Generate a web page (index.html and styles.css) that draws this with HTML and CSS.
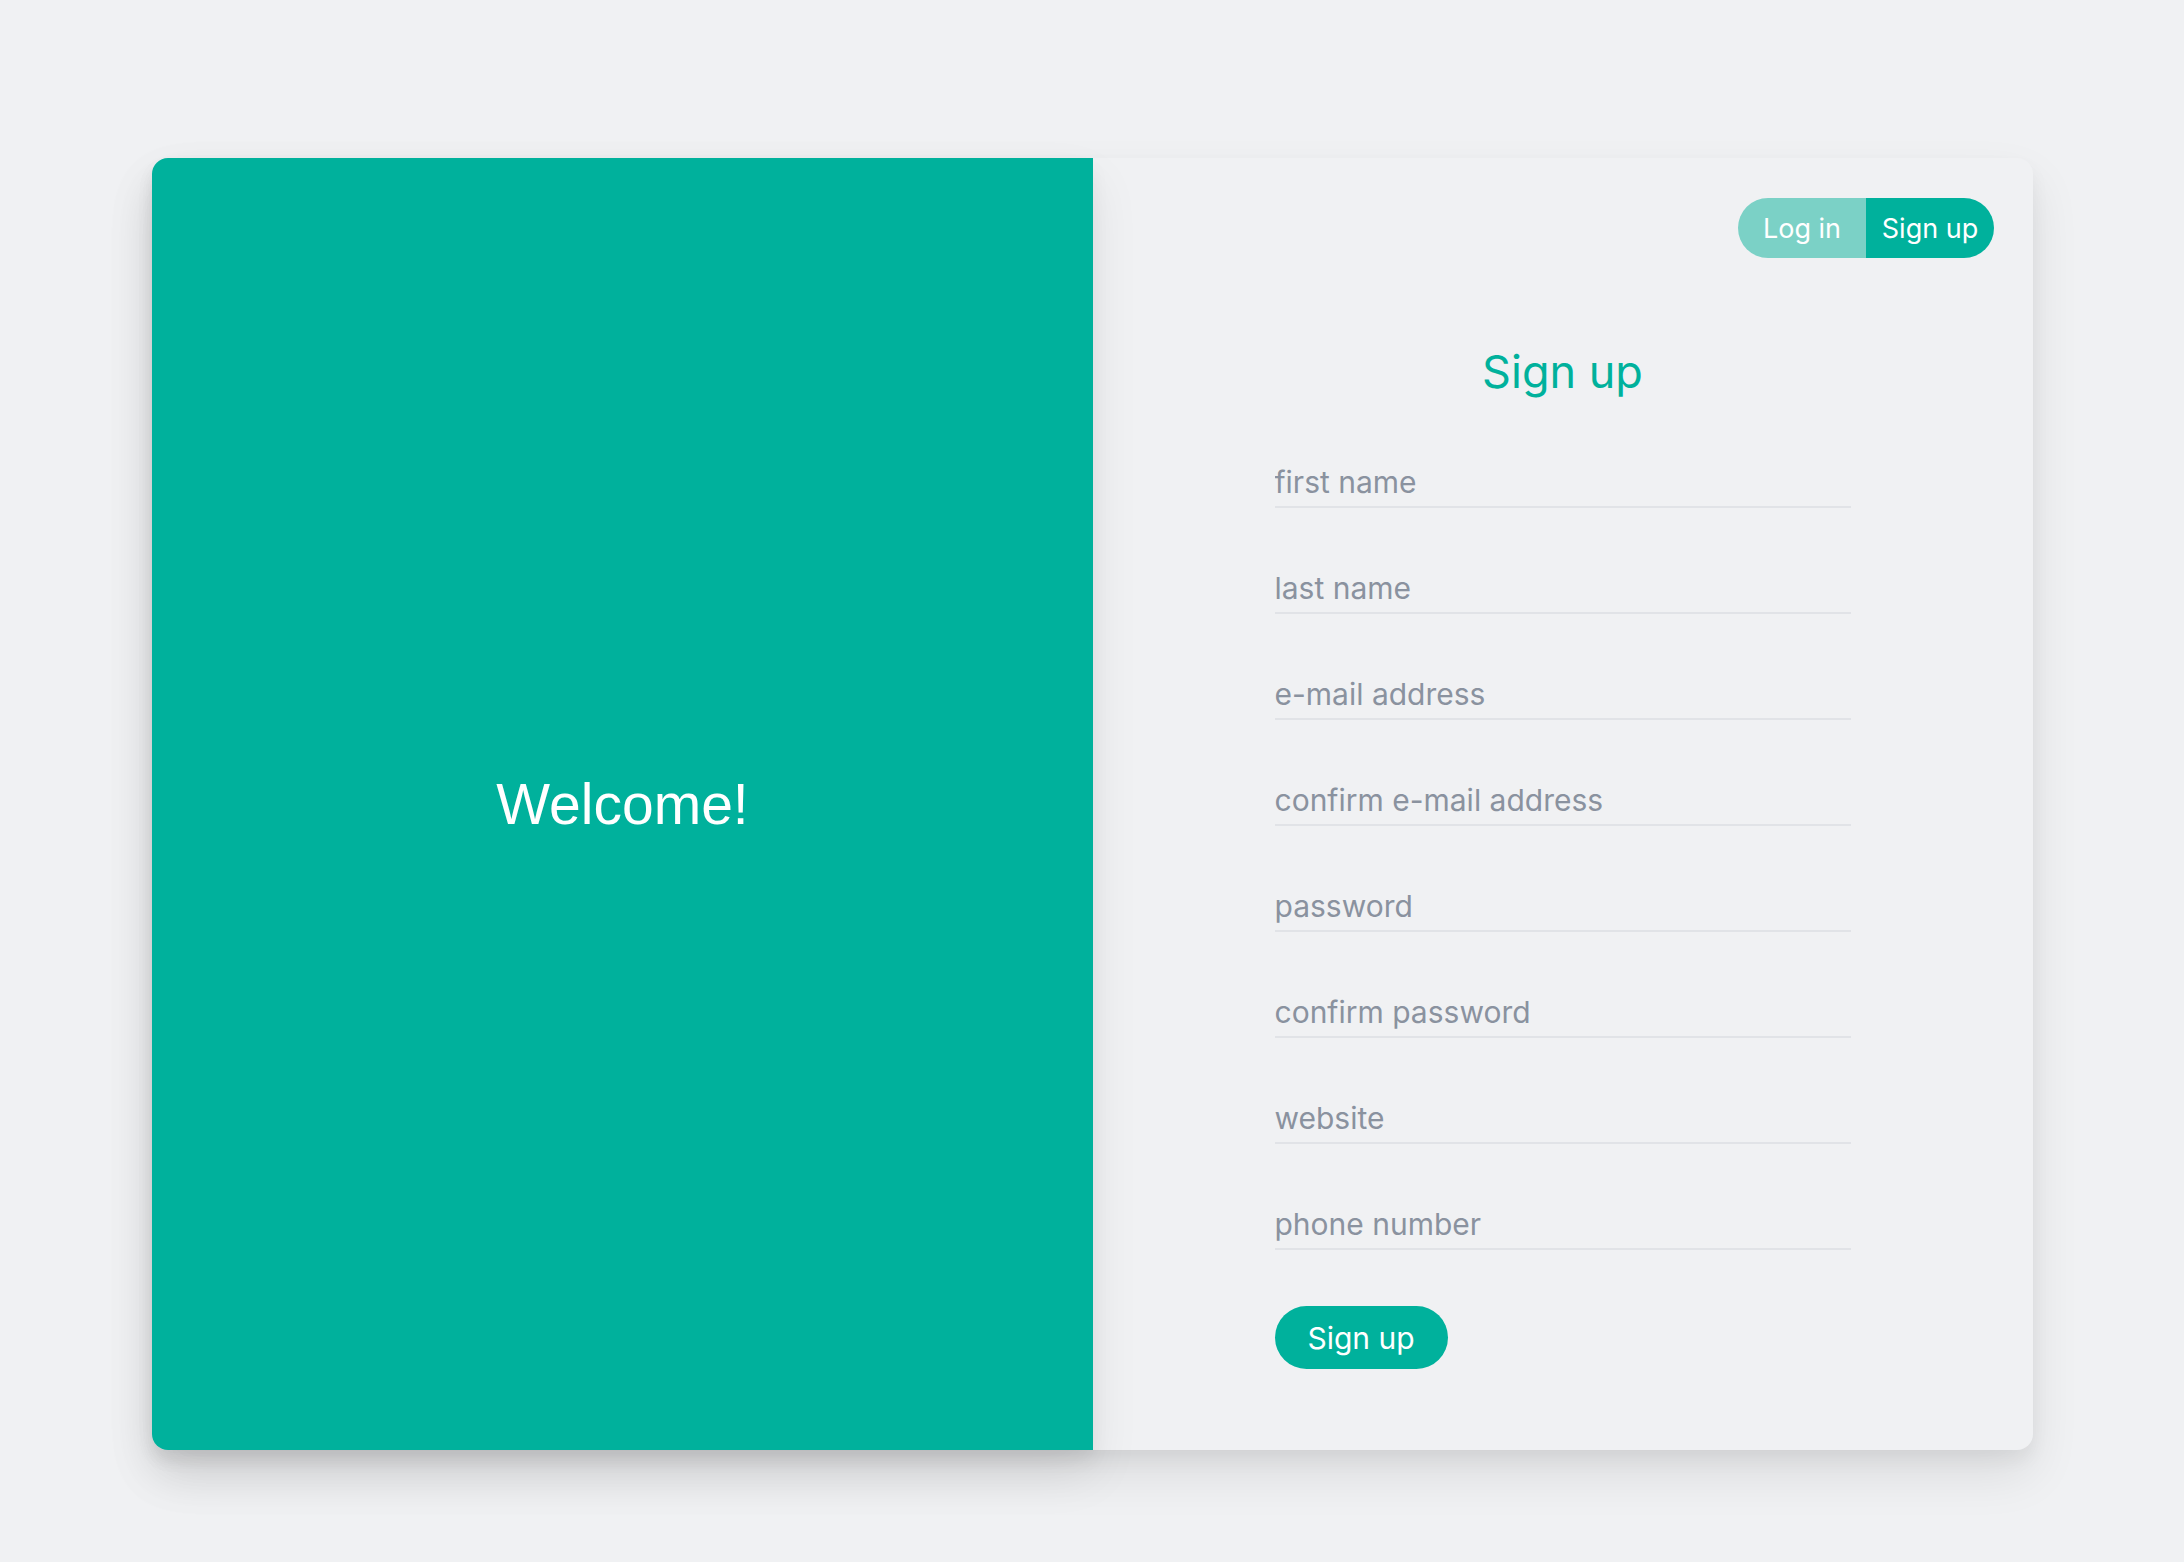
FILE: index.html
```html
<!DOCTYPE html>
<html lang="en">
<head>
<meta charset="utf-8">
<title>Sign up</title>
<link rel="stylesheet" href="styles.css">
</head>
<body>
<main class="page">
  <div class="card">
    <section class="welcome">
      <h2 class="welcome-title">Welcome!</h2>
    </section>
    <section class="panel">
      <div class="toggle">
        <button class="toggle-btn toggle-login" type="button">Log in</button>
        <button class="toggle-btn toggle-signup" type="button">Sign up</button>
      </div>
      <form class="form">
        <h1 class="form-title">Sign up</h1>
        <input class="field" type="text" placeholder="first name">
        <input class="field" type="text" placeholder="last name">
        <input class="field" type="email" placeholder="e-mail address">
        <input class="field" type="email" placeholder="confirm e-mail address">
        <input class="field" type="password" placeholder="password">
        <input class="field" type="password" placeholder="confirm password">
        <input class="field" type="text" placeholder="website">
        <input class="field" type="tel" placeholder="phone number">
        <button class="submit" type="button">Sign up</button>
      </form>
    </section>
  </div>
</main>
</body>
</html>
```
FILE: styles.css
```css
* { box-sizing: border-box; }

html, body {
  margin: 0;
  padding: 0;
  background: #f0f1f3;
  font-family: Inter, "Noto Sans", sans-serif;
}

.page {
  padding: 158px 0 0 152px;
  min-height: 1562px;
}

.card {
  display: flex;
  width: 1881px;
  height: 1292px;
  border-radius: 16px;
  background: #f0f1f3;
  box-shadow: 0 24px 50px rgba(0, 0, 0, 0.09), 0 10px 18px rgba(0, 0, 0, 0.05);
}

.welcome {
  position: relative;
  z-index: 1;
  flex: 0 0 941px;
  display: flex;
  align-items: center;
  justify-content: center;
  background: #00b19c;
  border-radius: 16px 0 0 16px;
  box-shadow: 0 24px 50px rgba(0, 0, 0, 0.08), 0 10px 18px rgba(0, 0, 0, 0.05);
}

.welcome-title {
  margin: 0;
  font-family: "Liberation Sans", Arial, sans-serif;
  font-weight: 400;
  font-size: 57px;
  color: #ffffff;
}

.panel {
  flex: 1;
  display: flex;
  flex-direction: column;
  padding: 40px 39px 0 0;
  border-radius: 0 16px 16px 0;
}

.toggle {
  display: flex;
  align-self: flex-end;
  border-radius: 30px;
  overflow: hidden;
}

.toggle-btn {
  width: 128px;
  height: 60px;
  border: none;
  padding: 0;
  font-family: Inter, "Noto Sans", sans-serif;
  font-size: 27px;
  color: #ffffff;
}

.toggle-login { background: #7bd1c6; }
.toggle-signup { background: #00b19c; }

.form {
  display: flex;
  flex-direction: column;
  width: 576px;
  margin: 85px auto 0;
  transform: translateX(19px);
}

.form-title {
  margin: 0 0 57px;
  text-align: center;
  font-size: 45px;
  line-height: 58px;
  font-weight: 400;
  color: #00b19c;
}

.field {
  height: 50px;
  margin-bottom: 56px;
  padding: 0;
  border: none;
  border-bottom: 2px solid #e1e3e7;
  background: transparent;
  font-family: Inter, "Noto Sans", sans-serif;
  font-size: 30px;
  color: #5b6470;
  outline: none;
}

.field::placeholder { color: #8a929f; }

.submit {
  align-self: flex-start;
  width: 173px;
  height: 63px;
  border: none;
  border-radius: 32px;
  background: #00b19c;
  color: #ffffff;
  font-family: Inter, "Noto Sans", sans-serif;
  font-size: 30px;
}
```
